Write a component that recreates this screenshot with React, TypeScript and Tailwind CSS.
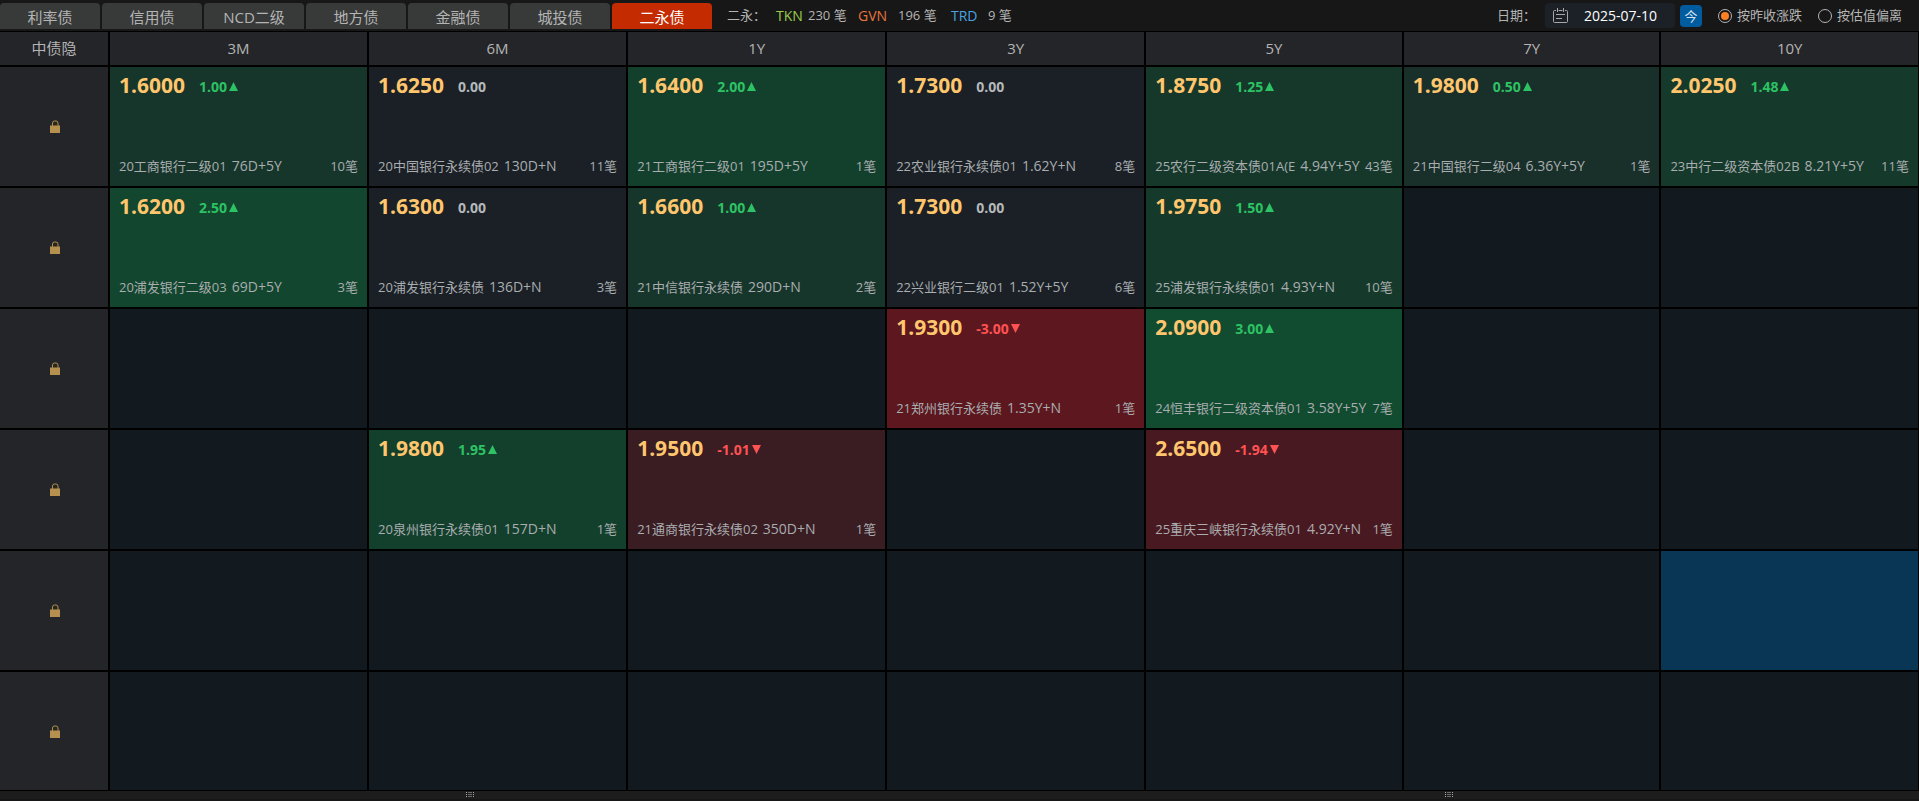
import { useState } from "react";
import clsx from "clsx";

type Quote = {
  price: string;
  change: string;
  name: string;
  term: string;
  count: number;
  bg: string;
};

const q = (price: string, change: string, name: string, term: string, count: number, bg: string): Quote => ({
  price,
  change,
  name,
  term,
  count,
  bg,
});

const tabs = ["利率债", "信用债", "NCD二级", "地方债", "金融债", "城投债", "二永债"];
const terms = ["3M", "6M", "1Y", "3Y", "5Y", "7Y", "10Y"];

const rows: (Quote | null)[][] = [
  [
    q("1.6000", "1.00", "20工商银行二级01", "76D+5Y", 10, "bg-[#17362b]"),
    q("1.6250", "0.00", "20中国银行永续债02", "130D+N", 11, "bg-[#1a2026]"),
    q("1.6400", "2.00", "21工商银行二级01", "195D+5Y", 1, "bg-[#13402d]"),
    q("1.7300", "0.00", "22农业银行永续债01", "1.62Y+N", 8, "bg-[#1a2026]"),
    q("1.8750", "1.25", "25农行二级资本债01A(E", "4.94Y+5Y", 43, "bg-[#16382b]"),
    q("1.9800", "0.50", "21中国银行二级04", "6.36Y+5Y", 1, "bg-[#182f2a]"),
    q("2.0250", "1.48", "23中行二级资本债02B", "8.21Y+5Y", 11, "bg-[#153a2b]"),
  ],
  [
    q("1.6200", "2.50", "20浦发银行二级03", "69D+5Y", 3, "bg-[#12462e]"),
    q("1.6300", "0.00", "20浦发银行永续债", "136D+N", 3, "bg-[#1a2026]"),
    q("1.6600", "1.00", "21中信银行永续债", "290D+N", 2, "bg-[#17362b]"),
    q("1.7300", "0.00", "22兴业银行二级01", "1.52Y+5Y", 6, "bg-[#1a2026]"),
    q("1.9750", "1.50", "25浦发银行永续债01", "4.93Y+N", 10, "bg-[#153a2b]"),
    null,
    null,
  ],
  [
    null,
    null,
    null,
    q("1.9300", "-3.00", "21郑州银行永续债", "1.35Y+N", 1, "bg-[#5c171f]"),
    q("2.0900", "3.00", "24恒丰银行二级资本债01", "3.58Y+5Y", 7, "bg-[#114b30]"),
    null,
    null,
  ],
  [
    null,
    q("1.9800", "1.95", "20泉州银行永续债01", "157D+N", 1, "bg-[#13402d]"),
    q("1.9500", "-1.01", "21通商银行永续债02", "350D+N", 1, "bg-[#3a1c23]"),
    null,
    q("2.6500", "-1.94", "25重庆三峡银行永续债01", "4.92Y+N", 1, "bg-[#491921]"),
    null,
    null,
  ],
  [null, null, null, null, null, null, null],
  [null, null, null, null, null, null, null],
];

function LockIcon() {
  return (
    <svg width="10" height="13" viewBox="0 0 10 13" className="mx-auto" aria-hidden="true">
      <path d="M2.5 6V3a2 2 0 0 1 2-2h1.5a2 2 0 0 1 2 2V6" fill="#2c2618" stroke="#a8905f" strokeWidth="1" />
      <rect x="0" y="5.5" width="10" height="7.5" fill="#b5904f" />
    </svg>
  );
}

function CalendarIcon() {
  return (
    <svg width="15" height="15" viewBox="0 0 15 15" fill="none" stroke="#a6a8aa" aria-hidden="true">
      <path d="M3 2.5H1.5a1 1 0 0 0-1 1v10a1 1 0 0 0 1 1h12a1 1 0 0 0 1-1v-10a1 1 0 0 0-1-1H12M5.5 2.5h4M4.5 0v4M10.5 0v4M3 6.5h9M3 10.5h6" />
    </svg>
  );
}

function Grip() {
  return (
    <svg width="8" height="6" viewBox="0 0 8 6" aria-hidden="true">
      <path d="M2 .5h4M2 2.5h4M2 4.5h4" stroke="#6a6a6a" />
      <path d="M0 .5h1M7 .5h1M0 2.5h1M7 2.5h1M0 4.5h1M7 4.5h1" stroke="#a8a8a8" />
    </svg>
  );
}

function QuoteCell({ quote }: { quote: Quote }) {
  const value = Number(quote.change);
  return (
    <div className="flex h-full flex-col justify-between px-[9px] pt-[3px] pb-2">
      <div className="flex items-center gap-[14px]">
        <span className="text-[21px] leading-[30px] font-bold text-[#ffc66d]">{quote.price}</span>
        <span
          className={clsx(
            "flex items-center gap-[2px] pt-[3px] text-[14px] leading-5 font-bold",
            value > 0 && "text-[#2dc264]",
            value < 0 && "text-[#ff5252]",
            value === 0 && "text-[#b5b8ba]",
          )}
        >
          {quote.change}
          {value !== 0 && (
            <svg width="9" height="9" viewBox="0 0 9 9" fill="currentColor" aria-hidden="true">
              <path d={value > 0 ? "M4.5 0L9 9H0z" : "M0 0h9L4.5 9z"} />
            </svg>
          )}
        </span>
      </div>
      <div className="flex items-baseline text-[13px] leading-6 whitespace-nowrap text-[#a9adaf]">
        <span>{quote.name}</span>
        <span className="ml-[5px] text-[14px]">{quote.term}</span>
        <span className="ml-auto">{quote.count}笔</span>
      </div>
    </div>
  );
}

export default function App() {
  const [tab, setTab] = useState("二永债");
  const [date, setDate] = useState("2025-07-10");
  const [mode, setMode] = useState("close");

  const modes = [
    { id: "close", label: "按昨收涨跌" },
    { id: "valuation", label: "按估值偏离" },
  ];

  return (
    <div className="min-h-screen bg-[#171717] font-['Open_Sans','Noto_Sans_CJK_SC',sans-serif] text-[#b4b4b4]">
      <header className="flex h-8 items-stretch border-b border-black">
        <nav className="flex gap-[2px] pt-[3px] pb-[2px]">
          {tabs.map((t) => (
            <button
              key={t}
              onClick={() => setTab(t)}
              className={clsx(
                "w-[100px] rounded-t pt-px text-[15px] leading-5",
                t === tab ? "bg-[#c42b00] text-white" : "bg-[#383a39]",
              )}
            >
              {t}
            </button>
          ))}
        </nav>

        <div className="flex items-center pl-[15px] text-[13px] whitespace-pre">
          <span className="w-[49px]">二永：</span>
          <span className="w-8 text-[14px] text-[#9ccc4f]">TKN</span>
          <span className="w-[50px]">230 笔</span>
          <span className="w-10 text-[14px] text-[#e8743b]">GVN</span>
          <span className="w-[53px]">196 笔</span>
          <span className="w-[37px] text-[14px] text-[#4aa3e0]">TRD</span>
          <span>9 笔</span>
        </div>

        <div className="ml-auto flex items-center pr-[17px] text-[13px]">
          <label htmlFor="date" className="mr-[9px]">
            日期：
          </label>
          <div className="flex h-[25px] w-[130px] items-center gap-4 rounded bg-[#1c2127] pl-2">
            <CalendarIcon />
            <input
              id="date"
              value={date}
              onChange={(e) => setDate(e.target.value)}
              className="w-20 bg-transparent text-[14px] text-white outline-none"
            />
          </div>
          <button
            onClick={() => setDate("2025-07-10")}
            className="ml-[5px] h-[22px] w-[22px] rounded bg-[#005b9f] text-[13px] leading-[22px] text-[#d5e3ef]"
          >
            今
          </button>
          {modes.map((m) => (
            <label key={m.id} className="ml-4 flex items-center gap-[5px]">
              <input
                type="radio"
                name="mode"
                checked={mode === m.id}
                onChange={() => setMode(m.id)}
                className="h-[14px] w-[14px] appearance-none rounded-full border border-[#b4b4b4] bg-clip-content p-[2px] checked:bg-[#ff7f27]"
              />
              {m.label}
            </label>
          ))}
        </div>
      </header>

      <table className="w-full table-fixed border-separate border-spacing-0">
        <thead>
          <tr className="text-[15px]">
            <th className="w-[110px] border-r-2 border-b-2 border-black bg-[#242528] p-0 font-normal">
              <div className="flex h-[33px] items-center justify-center">中债隐</div>
            </th>
            {terms.map((t, i) => (
              <th
                key={t}
                className={clsx(
                  "border-r-2 border-b-2 border-black bg-[#242528] p-0 font-normal last:border-r",
                  i < 4 && "w-[13.5%]",
                )}
              >
                <div className="flex h-[33px] items-center justify-center">{t}</div>
              </th>
            ))}
          </tr>
        </thead>
        <tbody>
          {rows.map((row, i) => (
            <tr key={i} className="group">
              <th className="border-r-2 border-b-2 border-black bg-[#242528] p-0 pl-[2px] group-last:border-b">
                <LockIcon />
              </th>
              {row.map((quote, j) => (
                <td
                  key={j}
                  className={clsx(
                    "border-r-2 border-b-2 border-black p-0 group-last:border-b last:border-r",
                    quote ? quote.bg : i === 4 && j === 6 ? "bg-[#0a3656]" : "bg-[#12191f]",
                  )}
                >
                  <div className="h-[119px] group-last:h-[118px]">{quote && <QuoteCell quote={quote} />}</div>
                </td>
              ))}
            </tr>
          ))}
        </tbody>
      </table>

      <footer className="flex h-[10px] justify-between border-b-2 border-[#171717] bg-[#1d1d1d] pt-px">
        <div className="flex w-[49%] justify-center">
          <Grip />
        </div>
        <div className="flex w-[49%] justify-center">
          <Grip />
        </div>
      </footer>
    </div>
  );
}
